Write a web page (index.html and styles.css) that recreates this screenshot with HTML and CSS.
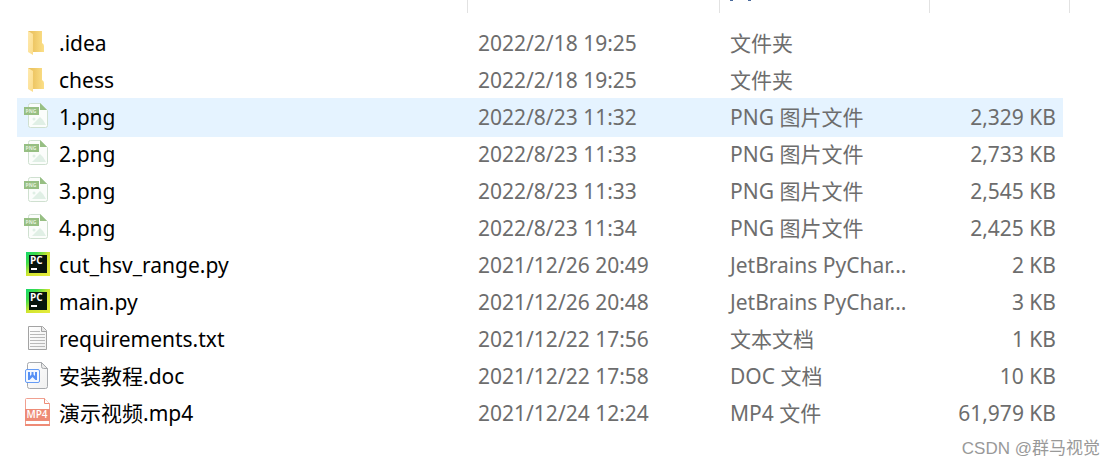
FILE: index.html
```html
<!DOCTYPE html>
<html lang="zh-CN">
<head>
    <meta charset="UTF-8">
    <meta name="viewport" content="width=device-width, initial-scale=1.0">
    <title>chess</title>
    <link rel="stylesheet" href="styles.css">
</head>
<body>
    <!-- Icon Definitions -->
    <svg class="icon-defs" width="0" height="0" aria-hidden="true">
        <defs>
            <linearGradient id="folder-front" x1="0" y1="0" x2="1" y2="1">
                <stop offset="0" stop-color="#ffeab0"/>
                <stop offset="1" stop-color="#fbdc8a"/>
            </linearGradient>
            <linearGradient id="folder-back" x1="0" y1="0" x2="1" y2="0">
                <stop offset="0" stop-color="#e8c060"/>
                <stop offset="0.4" stop-color="#efc968"/>
                <stop offset="1" stop-color="#fbdf88"/>
            </linearGradient>
            <linearGradient id="pycharm-edge" x1="0" y1="0" x2="1" y2="1">
                <stop offset="0" stop-color="#14d86c"/>
                <stop offset="0.25" stop-color="#3edb4a"/>
                <stop offset="0.5" stop-color="#d2e530"/>
                <stop offset="1" stop-color="#e6ec3c"/>
            </linearGradient>
            <linearGradient id="paper" x1="0" y1="0" x2="1" y2="1">
                <stop offset="0" stop-color="#ffffff"/>
                <stop offset="1" stop-color="#f0f0f0"/>
            </linearGradient>
        </defs>
        <symbol id="icon-folder" viewBox="0 0 26 28">
            <path d="M4 3h14v12q2 1 2 3v6H8z" fill="url(#folder-back)"/>
            <path d="M4 3l5 3v21l-5-3z" fill="url(#folder-front)"/>
        </symbol>
        <symbol id="icon-png" viewBox="0 0 26 28">
            <path d="M6.500 1.500h10l7 7v15q0 2-2 2H6.500q-2 0-2-2v-20q0-2 2-2z" fill="#fbfdfb" stroke="#cfe0d0"/>
            <path d="M16 1l7 7h-7z" fill="#97bf83"/>
            <path d="M8 23l4-4 4-4 3 3 3 5z" fill="#e0efe5"/>
            <circle cx="10" cy="17" r="1.500" fill="#e0efe5"/>
            <rect x="0" y="5" width="15" height="8" fill="#97bf83"/>
        </symbol>
        <symbol id="icon-pycharm" viewBox="0 0 26 28">
            <rect x="2" y="2" width="24" height="24" fill="url(#pycharm-edge)"/>
            <rect x="5" y="5" width="18" height="18" fill="#07150d"/>
            <rect x="7" y="18" width="6" height="2" fill="#fff"/>
        </symbol>
        <symbol id="icon-text" viewBox="0 0 26 28">
            <path d="M4.500 2.500h14l4 4v19h-18z" fill="url(#paper)" stroke="#a3a3a3"/>
            <path d="M17.500 2.500v5h5" fill="#e6e6e6" stroke="#a3a3a3"/>
            <path d="M6 7.500h10M6 10.500h15M6 13.500h15M6 16.500h15M6 19.500h15M6 22.500h15" stroke="#b9b9b9"/>
        </symbol>
        <symbol id="icon-doc" viewBox="0 0 26 28">
            <path d="M5.500 1.500h12l6 6v18q0 2-2 2h-16q-2 0-2-2v-22q0-2 2-2z" fill="url(#paper)" stroke="#a6a9ad"/>
            <path d="M17.500 1.500v4q0 2 2 2h4z" fill="#e9e9e9" stroke="#a6a9ad"/>
            <rect x="1.500" y="8.500" width="14" height="13" rx="1.500" fill="#f3f8ff" stroke="#659bf5"/>
            <path d="M4 11h2v4l1.500-1.500V11h2v2.500L11 15v-4h2v8h-1.500l-3-3-3 3H4z" fill="#5590f5"/>
        </symbol>
        <symbol id="icon-mp4" viewBox="0 0 26 28">
            <path d="M2.500 .5h18l5 5v22h-24v-26q0-1 1-1z" fill="#fff" stroke="#f0a090"/>
            <path d="M20.500 .5v5h5" fill="#fff" stroke="#ee8b76"/>
            <rect x="1" y="11" width="25" height="12" fill="#ee8b76"/>
            <rect x="1" y="26" width="25" height="2" fill="#ee8b76"/>
        </symbol>
    </svg>

    <!-- File List -->
    <table class="file-list">
        <colgroup>
            <col>
            <col class="col-date">
            <col class="col-type">
            <col class="col-size">
        </colgroup>
        <thead>
            <tr>
                <th><span class="resizer"></span></th>
                <th><span class="resizer"></span></th>
                <th>
                    <svg class="header-edge" width="24" height="1" aria-hidden="true"><path d="M0 0h3v1H0zM18 0h3v1h-3z"/></svg>
                    <span class="resizer"></span>
                </th>
                <th><span class="resizer resizer-last"></span></th>
            </tr>
        </thead>
        <tbody>
            <tr>
                <td class="name"><div class="file"><svg class="icon"><use href="#icon-folder"/></svg>.idea</div></td>
                <td>2022/2/18 19:25</td>
                <td>文件夹</td>
                <td class="size"></td>
            </tr>
            <tr>
                <td class="name"><div class="file"><svg class="icon"><use href="#icon-folder"/></svg>chess</div></td>
                <td>2022/2/18 19:25</td>
                <td>文件夹</td>
                <td class="size"></td>
            </tr>
            <tr class="hovered">
                <td class="name"><div class="file"><svg class="icon"><use href="#icon-png"/><text x="7" y="11" class="label-png">PNG</text></svg>1.png</div></td>
                <td>2022/8/23 11:32</td>
                <td>PNG 图片文件</td>
                <td class="size">2,329 KB</td>
            </tr>
            <tr>
                <td class="name"><div class="file"><svg class="icon"><use href="#icon-png"/><text x="7" y="11" class="label-png">PNG</text></svg>2.png</div></td>
                <td>2022/8/23 11:33</td>
                <td>PNG 图片文件</td>
                <td class="size">2,733 KB</td>
            </tr>
            <tr>
                <td class="name"><div class="file"><svg class="icon"><use href="#icon-png"/><text x="7" y="11" class="label-png">PNG</text></svg>3.png</div></td>
                <td>2022/8/23 11:33</td>
                <td>PNG 图片文件</td>
                <td class="size">2,545 KB</td>
            </tr>
            <tr>
                <td class="name"><div class="file"><svg class="icon"><use href="#icon-png"/><text x="7" y="11" class="label-png">PNG</text></svg>4.png</div></td>
                <td>2022/8/23 11:34</td>
                <td>PNG 图片文件</td>
                <td class="size">2,425 KB</td>
            </tr>
            <tr>
                <td class="name"><div class="file"><svg class="icon"><use href="#icon-pycharm"/><text x="6" y="14" class="label-pycharm">PC</text></svg>cut_hsv_range.py</div></td>
                <td>2021/12/26 20:49</td>
                <td>JetBrains PyChar...</td>
                <td class="size">2 KB</td>
            </tr>
            <tr>
                <td class="name"><div class="file"><svg class="icon"><use href="#icon-pycharm"/><text x="6" y="14" class="label-pycharm">PC</text></svg>main.py</div></td>
                <td>2021/12/26 20:48</td>
                <td>JetBrains PyChar...</td>
                <td class="size">3 KB</td>
            </tr>
            <tr>
                <td class="name"><div class="file"><svg class="icon"><use href="#icon-text"/></svg>requirements.txt</div></td>
                <td>2021/12/22 17:56</td>
                <td>文本文档</td>
                <td class="size">1 KB</td>
            </tr>
            <tr>
                <td class="name"><div class="file"><svg class="icon"><use href="#icon-doc"/></svg>安装教程.doc</div></td>
                <td>2021/12/22 17:58</td>
                <td>DOC 文档</td>
                <td class="size">10 KB</td>
            </tr>
            <tr>
                <td class="name"><div class="file"><svg class="icon"><use href="#icon-mp4"/><text x="13" y="20" class="label-mp4">MP4</text></svg>演示视频.mp4</div></td>
                <td>2021/12/24 12:24</td>
                <td>MP4 文件</td>
                <td class="size">61,979 KB</td>
            </tr>
        </tbody>
    </table>

    <!-- Watermark -->
    <footer class="watermark">CSDN @群马视觉</footer>
</body>
</html>
```
FILE: styles.css
```css
/* Reset */
* {
    box-sizing: border-box;
    margin: 0;
    padding: 0;
}
body {
    font-family: "Noto Sans", "Noto Sans CJK SC", sans-serif;
    font-size: 21px;
    color: #6d6d6d;
    background-color: #fff;
    padding: 0 52px 0 17px;
}
.icon-defs {
    position: absolute;
}

/* File List */
.file-list {
    width: 100%;
    table-layout: fixed;
    border-collapse: collapse;
}
.col-date {
    width: 252px;
}
.col-type {
    width: 210px;
}
.col-size {
    width: 133px;
}

/* Column Headers */
th {
    position: relative;
    height: 25px;
}
.resizer {
    position: absolute;
    top: 0;
    right: 0;
    width: 1px;
    height: 13px;
    background-color: #e2e2e2;
}
.resizer-last {
    right: -7px;
}
.header-edge {
    position: absolute;
    top: 0;
    left: 10px;
    fill: #4a6a9c;
}

/* Rows */
td {
    height: 37px;
    line-height: 36px;
    padding: 0 0 1px 10px;
    white-space: nowrap;
    vertical-align: top;
}
.hovered {
    background-color: #e5f3ff;
    box-shadow: 0 1px 0 #e5f3ff, 0 -1px 0 #e5f3ff;
}
.name {
    color: #000;
    padding-left: 7px;
}
.file {
    display: flex;
    align-items: center;
    gap: 9px;
    height: 36px;
}
.icon {
    flex: none;
    width: 26px;
    height: 28px;
    margin-bottom: 2px;
}
.size {
    text-align: right;
    padding-right: 7px;
}

/* Icon Labels */
.label-png {
    font: bold 5px "Open Sans", sans-serif;
    fill: #e4f0de;
    text-anchor: middle;
}
.label-pycharm {
    font: bold 10px "Open Sans", sans-serif;
    fill: #fff;
}
.label-mp4 {
    font: 600 10px "Open Sans", sans-serif;
    fill: #fff;
    text-anchor: middle;
}

/* Watermark */
.watermark {
    font-family: "Liberation Sans", "Noto Sans CJK SC", sans-serif;
    font-size: 17px;
    line-height: 34px;
    color: #999;
    text-align: right;
    margin-right: -37px;
}
```
